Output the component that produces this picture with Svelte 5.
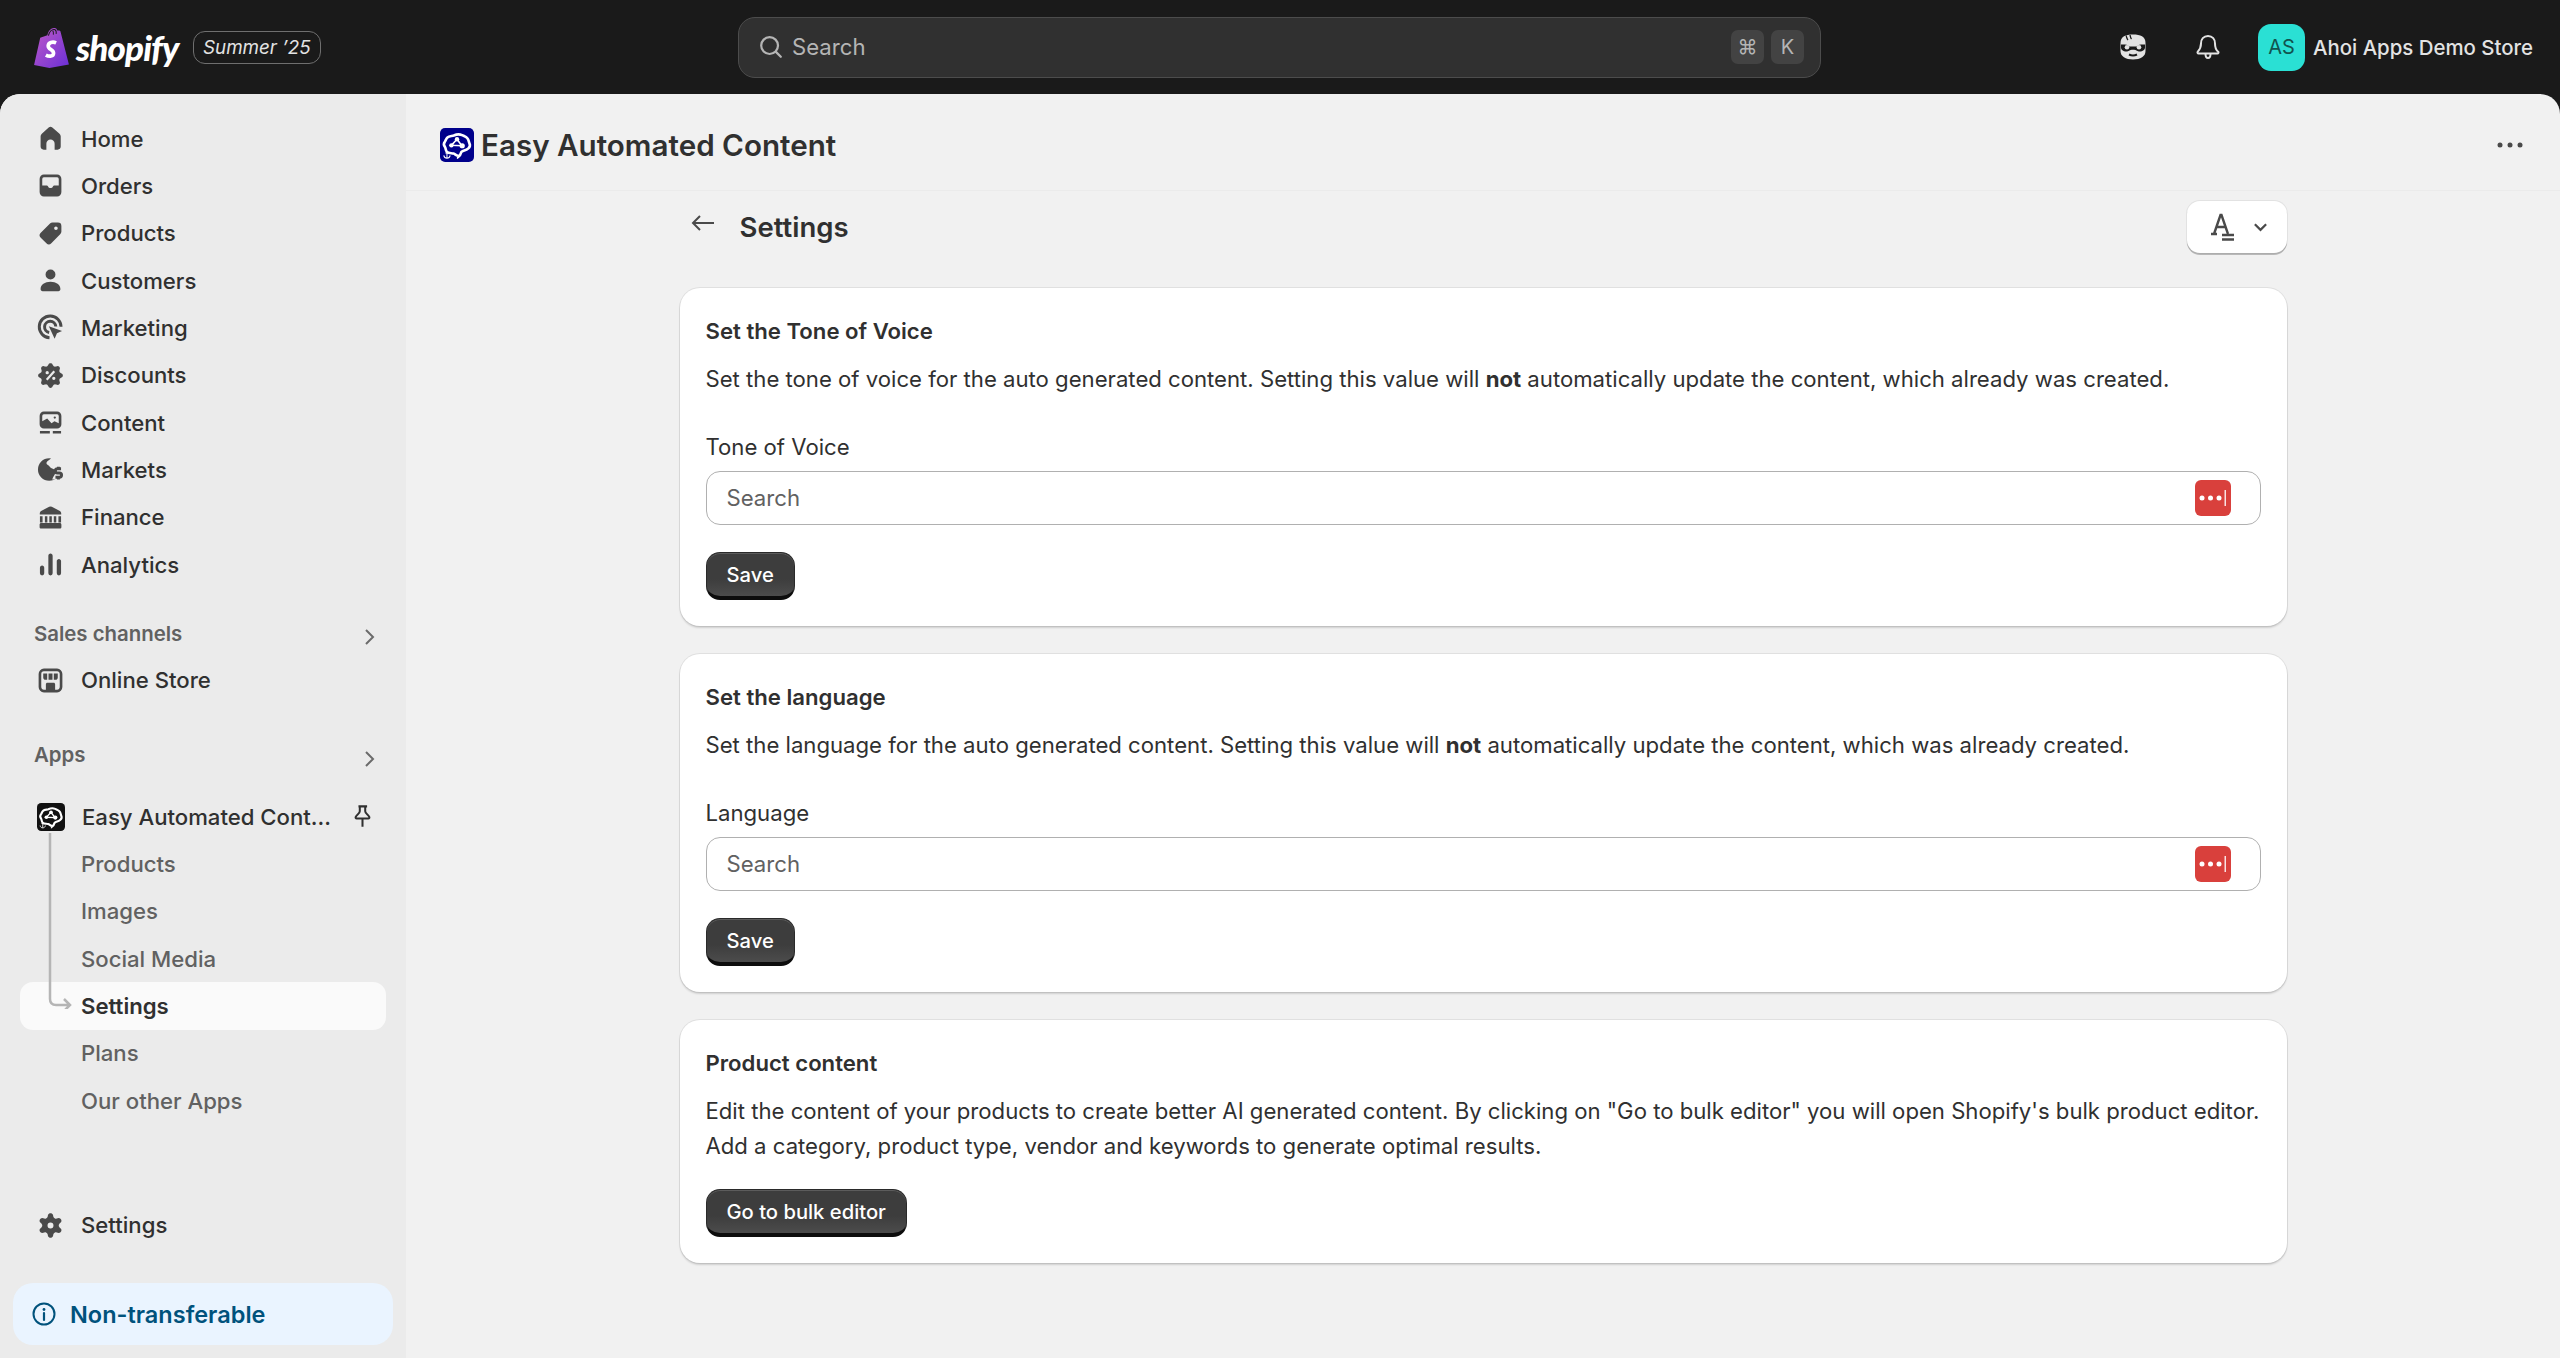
<script>
	// round path helpers, the polaris icons are drawn on a 20 box
	function circle(cx, cy, r) {
		return `M${cx - r} ${cy}a${r} ${r} 0 1 0 ${r * 2} 0a${r} ${r} 0 1 0 ${-r * 2} 0z`;
	}

	function lobed(n, r, amp, sharp = 1) {
		let pts = [];
		for (let i = 0; i < 120; i++) {
			const t = (i / 120) * Math.PI * 2;
			const c = Math.cos(n * t);
			const rr = r + amp * Math.sign(c) * Math.pow(Math.abs(c), sharp);
			pts.push(`${(10 + rr * Math.sin(t)).toFixed(2)} ${(10 - rr * Math.cos(t)).toFixed(2)}`);
		}
		return 'M' + pts.join('L') + 'z';
	}

	const icons = {
		home: [['f', 'M8.9 3.4a1.7 1.7 0 0 1 2.2 0l4.2 3.5c.6.5.9 1.100.9 1.900v6.100c0 1-.8 1.850-1.850 1.850H12.500v-3.600a2.500 2.500 0 0 0-5 0v3.600H5.850C4.800 16.750 4 15.900 4 14.900V8.800c0-.8.3-1.400.9-1.900z']],
		orders: [['f', 'M6 3.400h8A2.600 2.600 0 0 1 16.600 6v8a2.600 2.600 0 0 1-2.600 2.600H6A2.600 2.600 0 0 1 3.400 14V6A2.600 2.600 0 0 1 6 3.400zM5 10h2.400c.6 0 1 .3 1.300.9.2.4.6.6 1.300.6s1.100-.2 1.300-.6c.3-.6.7-.9 1.300-.9H15V6a1 1 0 0 0-1-1H6a1 1 0 0 0-1 1z']],
		tag: [['f', 'M11.200 3.400h3.300a2.100 2.100 0 0 1 2.100 2.100v3.300c0 .6-.2 1.100-.6 1.500l-5.500 5.600a2.100 2.100 0 0 1-3 0l-3.400-3.400a2.100 2.100 0 0 1 0-3l5.600-5.500c.4-.4.9-.6 1.500-.6z' + circle(13.3, 6.8, 1.1)]],
		person: [['f', circle(10, 6.4, 3) + 'M4 15.200c0-2.600 2.600-4.400 6-4.400s6 1.800 6 4.400c0 .8-.5 1.300-1.200 1.300H5.200c-.7 0-1.200-.5-1.200-1.300z']],
		target: [
			['s', 'M9.400 16.200A6.600 6.600 0 1 1 16.400 9.600'],
			['s', 'M9.200 13A3.400 3.400 0 1 1 13.200 9.400'],
			['f', 'M9 9.200l8 2.900-3.100 1.400-1.400 3.300z']
		],
		discount: [['f', lobed(8, 6.7, 0.8, 0.7) + circle(8, 8.3, 1) + circle(12, 11.7, 1) + 'M11.800 6.900l1 1-4.600 5.200-1-1z']],
		content: [
			['f', 'M6 3.400h8A2.600 2.600 0 0 1 16.600 6v5a2.600 2.600 0 0 1-2.600 2.600H6A2.600 2.600 0 0 1 3.400 11V6A2.600 2.600 0 0 1 6 3.400zM5 9.200V6a1 1 0 0 1 1-1h8a1 1 0 0 1 1 1v4.400l-2.600-1.200-1.800 1.200L8 7.600z' + circle(12.6, 7, .7)],
			['f', 'M3.600 15.200h6v1.400h-6zM11.400 15.200h5v1.400h-5z']
		],
		markets: [
			['f', circle(9.2, 10, 6.8)],
			['c', 'M10.400 3c-.6 1.400-2.400 1.400-2.800 2.800-.4 1.300 1.400 1.600 2.200 2.800.6 1 1.800.6 2.600 1.400 1 .9.6 2.400 0 3.400-.5.9-1 1.600-1.400 2.600h7V3z'],
			['s', 'M16.400 9.600h-2.200a1.200 1.200 0 0 0 0 2.500h1.200a1.200 1.200 0 0 1 0 2.600h-2.400M14.800 8.400v1.200M14.800 14.700v1.400']
		],
		finance: [
			['f', 'M9.200 3.500a2 2 0 0 1 1.600 0l4.600 2.400c.8.4 1.100.9 1.100 1.700v.6H3.500v-.6c0-.8.3-1.300 1.100-1.700z'],
			['f', 'M3.600 9.300h1.600v3.800H3.600zM6.600 9.300h1.500v3.800H6.600zM9.300 9.300h1.500v3.800H9.300zM12 9.300h1.500v3.800H12zM14.800 9.300h1.600v3.800h-1.600z'],
			['f', 'M4.300 13.400h11.400c.5 0 .9.4.9.9v1.600c0 .4-.4.8-.9.8H4.300c-.5 0-.9-.4-.9-.8v-1.600c0-.5.4-.9.9-.9z']
		],
		analytics: [['f', 'M4.900 10.600c.7 0 1.300.6 1.300 1.300v3.400a1.300 1.300 0 0 1-2.600 0v-3.400c0-.7.6-1.300 1.300-1.300zM10 3.400c.7 0 1.300.6 1.300 1.300v10.600a1.300 1.300 0 0 1-2.600 0V4.700c0-.7.6-1.300 1.300-1.300zM15.100 6.600c.7 0 1.300.6 1.300 1.300v7.400a1.300 1.300 0 0 1-2.600 0V7.900c0-.7.6-1.300 1.300-1.300z']],
		store: [
			['f', 'M6 2.800h8A3.200 3.200 0 0 1 17.200 6v8a3.200 3.200 0 0 1-3.200 3.200H6A3.200 3.200 0 0 1 2.800 14V6A3.200 3.200 0 0 1 6 2.800zM6 4.400A1.600 1.600 0 0 0 4.400 6v8c0 .9.7 1.600 1.600 1.600h1.200v-3.400c0-.5.4-.9.9-.9h3.800c.5 0 .9.4.9.9v3.400H14c.9 0 1.600-.7 1.600-1.600V6c0-.9-.7-1.600-1.600-1.600z'],
			['f', 'M5.600 5.800h2.400v3.800H7c-.8 0-1.400-.6-1.400-1.400zM8.800 5.800h2.400v3.800H8.800zM12 5.800h2.400v2.400c0 .8-.6 1.400-1.400 1.400h-1z'],
			['f', 'M8.900 13h2.200v2.600H8.900z']
		],
		gear: [['f', lobed(6, 6.2, 1.2, 0.6) + circle(10, 10, 1.8)]]
	};

	const mainNav = [
		{ label: 'Home', icon: 'home' },
		{ label: 'Orders', icon: 'orders' },
		{ label: 'Products', icon: 'tag' },
		{ label: 'Customers', icon: 'person' },
		{ label: 'Marketing', icon: 'target' },
		{ label: 'Discounts', icon: 'discount' },
		{ label: 'Content', icon: 'content' },
		{ label: 'Markets', icon: 'markets' },
		{ label: 'Finance', icon: 'finance' },
		{ label: 'Analytics', icon: 'analytics' }
	];

	const subNav = ['Products', 'Images', 'Social Media', 'Settings', 'Plans', 'Our other Apps'];
</script>

{#snippet icon(name)}
	<svg class="nav-icon" viewBox="0 0 20 20">
		{#each icons[name] as [kind, d]}
			<path class={kind} {d} />
		{/each}
	</svg>
{/snippet}

{#snippet brain()}
	<g transform="translate(-1.800 -1.600) scale(1.180)">
		<path d="M10.600 15.200c-1 0-1.500-.9-2.300-1.100-1.100-.3-2.500 0-3.300-.8-.8-.7-.5-1.800-1-2.500C3.400 10 3.300 8.900 4 8.100c.5-.6.5-1.400 1.200-2 1-.9 2.200-.6 3.200-1 1.300-.6 2.800-.8 4.100-.2 1 .5 2 .7 2.700 1.600.7.8.6 1.700 1 2.500.4.900.2 1.900-.5 2.500-.8.8-1.800 1-2.800 1.300-.6.2-.9.5-1 1.100-.1.600-.5 1.300-1.300 1.800z" fill="none" stroke="#fff" stroke-width="1.300" />
		<path d="M10 7l-2.800 3 5.200.2zM10 7l2.400 3.200" fill="none" stroke="#fff" stroke-width=".8" />
		<circle cx="10" cy="7" r="1.100" fill="#fff" />
		<circle cx="7.200" cy="10" r="1.100" fill="#fff" />
		<circle cx="12.600" cy="10.200" r="1.300" fill="#fff" />
		<path d="M5 13.200v3.200M3.400 15c.2 1 .8 1.400 1.600 1.400S6.400 16 6.600 15M4.200 13.800h1.600" fill="none" stroke="#fff" stroke-width=".5" />
	</g>
{/snippet}

{#snippet card(title, children)}
	<section class="card">
		<h3>{title}</h3>
		{@render children()}
	</section>
{/snippet}

{#snippet picker(label)}
	<div class="field-label">{label}</div>
	<div class="field">
		<span>Search</span>
		<svg class="pw" viewBox="0 0 36 36">
			<rect width="36" height="36" rx="6" fill="#d9403c" />
			<circle cx="7" cy="18" r="2.500" fill="#fff" />
			<circle cx="15.500" cy="18" r="2.500" fill="#fff" />
			<circle cx="24" cy="18" r="2.500" fill="#fff" />
			<rect x="29.500" y="10" width="1.500" height="16" fill="#fff" opacity=".85" />
		</svg>
	</div>
	<button class="dark">Save</button>
{/snippet}

<div class="shell">
	<header class="topbar">
		<div class="brand">
			<svg class="bag" viewBox="0 0 34 40">
				<defs>
					<linearGradient id="bagfill" x1="0" y1="0" x2="1" y2="1">
						<stop offset="0" stop-color="#c05ac8" />
						<stop offset="1" stop-color="#6a2fd6" />
					</linearGradient>
				</defs>
				<path d="M6 10.500 13 8C13.800 3.500 17 .5 20 1c1.500.2 2.300 1.200 2.700 2.500l2-.2 1 .8L34 36.500 15 40 0 37z" fill="url(#bagfill)" />
				<path d="M14 8.500C15 4.500 17.500 2 19.800 2.400c1.400.3 2 2.200 1.700 4.300M18.200 3.500C19 5 19 6.500 18.800 7.500" fill="none" stroke="#1a1a1a" stroke-width="1" />
				<path d="M21.500 15.500c-3.500-1.500-7.500-.3-7.700 2.800-.2 3.700 5.500 3.700 5.200 7.400-.2 2.900-4 3.600-7.500 1.700" fill="none" stroke="#fff" stroke-width="3.600" />
			</svg>
			<span class="wordmark">shopify</span>
			<span class="edition">Summer ’25</span>
		</div>

		<div class="global-search">
			<svg class="search-icon" viewBox="0 0 20 20">
				<circle cx="9" cy="9" r="6" fill="none" stroke="#b5b5b5" stroke-width="1.600" />
				<path d="M13.500 13.500l3.500 3.500" stroke="#b5b5b5" stroke-width="1.600" stroke-linecap="round" />
			</svg>
			<span class="search-text">Search</span>
			<kbd>⌘</kbd>
			<kbd>K</kbd>
		</div>

		<div class="top-right">
			<svg class="top-icon mask" viewBox="0 0 26 26">
				<path d="M13 .5c7.500 0 12.500 2 12.500 8.500v8c0 5.500-5 8.500-12.500 8.500S.5 22.500.5 17V9C.5 2.500 5.500.5 13 .5z" fill="#e3e3e3" />
				<path d="M1 10.500h4c2.500 0 3 1.200 4 2h8c1-.8 1.500-2 4-2h4v3c0 2-2 4-5.500 4-2 0-3-1.800-6.500-1.800S8.500 17.500 6.500 17.500C3 17.500 1 15.500 1 13.500z" fill="#1a1a1a" />
				<circle cx="7" cy="13.300" r="2.300" fill="#e3e3e3" />
				<circle cx="19" cy="13.300" r="2.300" fill="#e3e3e3" />
				<path d="M9 20.500c2.500 1.200 5.500 1.200 8 0" stroke="#1a1a1a" stroke-width="2" fill="none" />
				<path d="M6 1.500c1 2 .5 3 2 4.500M10 1c.5 2 .5 3 1.500 4" stroke="#1a1a1a" stroke-width="1.300" fill="none" />
			</svg>
			<svg class="top-icon bell" viewBox="0 0 26 26">
				<path d="M13 2c-4.500 0-7 3.300-7 7.500 0 3.500-1.200 6-3.200 8.200-.7.8-.2 1.800.8 1.800h18.800c1 0 1.500-1 .8-1.800C20.200 15.500 20 13 20 9.500 20 5.300 17.500 2 13 2z" fill="none" stroke="#e3e3e3" stroke-width="2" />
				<path d="M10.500 20c0 2.800 1.200 4 2.500 4s2.500-1.200 2.500-4" fill="none" stroke="#e3e3e3" stroke-width="2" />
			</svg>
			<span class="avatar">AS</span>
			<span class="store">Ahoi Apps Demo Store</span>
		</div>
	</header>

	<div class="frame">
		<aside class="sidebar">
			<nav>
				{#each mainNav as item}
					<a class="nav-row" href="#top">
						{@render icon(item.icon)}
						<span>{item.label}</span>
					</a>
				{/each}
			</nav>

			<div class="section-head first">
				<span>Sales channels</span>
				<svg class="chev" viewBox="0 0 12 20"><path d="M2 3l7 7-7 7" /></svg>
			</div>
			<a class="nav-row" href="#top">
				{@render icon('store')}
				<span>Online Store</span>
			</a>

			<div class="section-head second">
				<span>Apps</span>
				<svg class="chev" viewBox="0 0 12 20"><path d="M2 3l7 7-7 7" /></svg>
			</div>

			<div class="app-group">
				<a class="nav-row app-row" href="#top">
					<svg class="app-logo small" viewBox="0 0 20 20">
						<rect width="20" height="20" rx="3" fill="#111" />
						{@render brain()}
					</svg>
					<span class="truncate">Easy Automated Cont...</span>
					<svg class="pin" viewBox="0 0 20 20">
						<path d="M7 2.500h6.400M8 2.500v3.600c0 1.400-2.200 2.600-3 4.200-.3.700 0 1.200.7 1.200h8.600c.7 0 1-.5.700-1.200-.8-1.600-3-2.800-3-4.200V2.500M10 11.500v6" />
					</svg>
				</a>
				<svg class="tree" viewBox="0 0 24 176">
					<path d="M2 0v166c0 4 2 6 6 6h14M16 166l6 6-6 6" />
				</svg>
				{#each subNav as sub}
					<a class="nav-row sub" class:active={sub === 'Settings'} href="#top">
						<span>{sub}</span>
					</a>
				{/each}
			</div>

			<div class="side-bottom">
				<a class="nav-row" href="#top">
					{@render icon('gear')}
					<span>Settings</span>
				</a>
				<div class="notice">
					<svg class="info" viewBox="0 0 24 24">
						<circle cx="12" cy="12" r="10.500" fill="none" stroke="#00527c" stroke-width="2" />
						<circle cx="12" cy="7.500" r="1.400" fill="#00527c" />
						<path d="M12 11v7" stroke="#00527c" stroke-width="2.200" stroke-linecap="round" />
					</svg>
					<span>Non-transferable</span>
				</div>
			</div>
		</aside>

		<main class="main">
			<div class="app-bar">
				<svg class="app-logo" viewBox="0 0 20 20">
					<rect width="20" height="20" rx="3" fill="#00008b" />
					{@render brain()}
				</svg>
				<h1>Easy Automated Content</h1>
				<svg class="dots" viewBox="0 0 26 6">
					<circle cx="3" cy="3" r="2.500" />
					<circle cx="13" cy="3" r="2.500" />
					<circle cx="23" cy="3" r="2.500" />
				</svg>
			</div>

			<div class="page">
				<div class="page-head">
					<svg class="back" viewBox="0 0 24 20">
						<path d="M23 10H2M9 3l-7 7 7 7" />
					</svg>
					<h2>Settings</h2>
					<button class="font-btn" aria-label="Font options">
						<svg class="font-a" viewBox="0 0 26 28">
							<path d="M2 21h6M5 21 11.500 2h1L19 21M7 14h10.500" fill="none" stroke="#4a4a4a" stroke-width="2.400" />
							<path d="M13 22h12M13 26.500h12" stroke="#4a4a4a" stroke-width="2.400" />
						</svg>
						<svg class="font-chev" viewBox="0 0 16 10"><path d="M2 2l6 6 6-6" /></svg>
					</button>
				</div>

				{#snippet tone()}
					<p>Set the tone of voice for the auto generated content. Setting this value will <b>not</b> automatically update the content, which already was created.</p>
					{@render picker('Tone of Voice')}
				{/snippet}
				{#snippet language()}
					<p>Set the language for the auto generated content. Setting this value will <b>not</b> automatically update the content, which was already created.</p>
					{@render picker('Language')}
				{/snippet}
				{#snippet bulk()}
					<p>Edit the content of your products to create better AI generated content. By clicking on "Go to bulk editor" you will open Shopify's bulk product editor.<br />Add a category, product type, vendor and keywords to generate optimal results.</p>
					<button class="dark bulk">Go to bulk editor</button>
				{/snippet}

				<div class="stack">
					{@render card('Set the Tone of Voice', tone)}
					{@render card('Set the language', language)}
					{@render card('Product content', bulk)}
				</div>
			</div>
		</main>
	</div>
</div>

<style>
	:global(body) {
		margin: 0;
		background: #1a1a1a;
		font-family: Inter, 'Noto Sans', sans-serif;
		color: #303030;
	}

	.shell {
		height: 1358px;
		display: flex;
		flex-direction: column;
		overflow: hidden;
	}

	.topbar {
		height: 94px;
		flex: none;
		display: grid;
		grid-template-columns: 738px 1083px 1fr;
		align-items: center;
	}

	.brand {
		display: flex;
		align-items: center;
		padding-left: 34px;
	}

	.bag {
		width: 35px;
		height: 41px;
		flex: none;
	}

	.wordmark {
		margin-left: 7px;
		width: 103px;
		font: italic 900 35px/40px Lato, sans-serif;
		letter-spacing: -0.9px;
		color: #fff;
		white-space: nowrap;
	}

	.edition {
		margin-left: 14px;
		height: 31px;
		padding: 0 9px;
		display: flex;
		align-items: center;
		border: 1.500px solid #6f6f6f;
		border-radius: 12px;
		font-size: 18.800px;
		font-style: italic;
		color: #e3e3e3;
		white-space: nowrap;
	}

	.global-search {
		height: 61px;
		box-sizing: border-box;
		display: flex;
		align-items: center;
		gap: 7px;
		padding: 0 16px 0 18px;
		background: #303030;
		border: 1.500px solid #4c4c4c;
		border-radius: 17px;
		color: #b5b5b5;
		font-size: 22.150px;
	}

	.search-icon {
		width: 28px;
		height: 28px;
		flex: none;
	}

	.search-text {
		flex: 1;
	}

	kbd {
		width: 33px;
		height: 34px;
		display: flex;
		align-items: center;
		justify-content: center;
		background: #434343;
		border-radius: 7px;
		font-family: inherit;
		font-size: 20px;
	}

	.top-right {
		display: flex;
		align-items: center;
		justify-content: flex-end;
		padding-right: 27px;
	}

	.top-icon {
		width: 26px;
		height: 26px;
		flex: none;
	}

	.bell {
		margin-left: 49px;
	}

	.avatar {
		margin-left: 37px;
		width: 47px;
		height: 47px;
		flex: none;
		display: flex;
		align-items: center;
		justify-content: center;
		background: #2ae0d4;
		border-radius: 13px;
		color: #11544f;
		font-size: 20px;
	}

	.store {
		margin-left: 8px;
		color: #e3e3e3;
		font-size: 20.400px;
		font-weight: 500;
		white-space: nowrap;
	}

	.frame {
		flex: 1;
		display: flex;
		border-radius: 20px 20px 0 0;
		overflow: hidden;
		background: #f1f1f1;
		min-height: 0;
	}

	.sidebar {
		width: 406px;
		flex: none;
		box-sizing: border-box;
		padding: 21px 13px 13px;
		display: flex;
		flex-direction: column;
		background: #ebebeb;
	}

	.nav-row {
		height: 47.330px;
		flex: none;
		display: flex;
		align-items: center;
		padding-left: 21px;
		box-sizing: border-box;
		color: #303030;
		text-decoration: none;
		font-size: 22.150px;
		font-weight: 500;
	}

	.nav-icon {
		width: 33px;
		height: 33px;
		margin-right: 14px;
		flex: none;
	}

	.nav-icon :global(.f) {
		fill: #4a4a4a;
		fill-rule: evenodd;
	}

	.nav-icon :global(.s) {
		fill: none;
		stroke: #4a4a4a;
		stroke-width: 1.800;
	}

	.nav-icon :global(.c) {
		fill: #ebebeb;
	}

	.section-head {
		display: flex;
		align-items: center;
		justify-content: space-between;
		padding: 0 17px 0 21px;
		height: 34px;
		color: #616161;
		font-size: 20.400px;
		font-weight: 600;
	}

	.section-head.first {
		margin-top: 28px;
		margin-bottom: 6.500px;
	}

	.section-head.second {
		margin-top: 33.500px;
		margin-bottom: 21.500px;
	}

	.chev {
		width: 12px;
		height: 20px;
		margin-top: 8px;
		fill: none;
		stroke: #6b6b6b;
		stroke-width: 2;
	}

	.app-group {
		position: relative;
	}

	.app-row {
		font-weight: 520;
	}

	.app-logo {
		width: 34px;
		height: 34px;
		margin-right: 7px;
		flex: none;
	}

	.app-logo.small {
		width: 28px;
		height: 28px;
		margin: 0 17px 0 3px;
	}

	.truncate {
		width: 267px;
		white-space: nowrap;
	}

	.pin {
		width: 27px;
		height: 27px;
		flex: none;
		fill: none;
		stroke: #303030;
		stroke-width: 1.500;
	}

	.tree {
		position: absolute;
		left: 35px;
		top: 40px;
		width: 24px;
		height: 176px;
		fill: none;
		stroke: #b5b5b5;
		stroke-width: 2.500;
		z-index: 1;
	}

	.sub {
		padding-left: 68px;
		color: #616161;
		font-weight: 450;
	}

	.sub.active {
		background: #fafafa;
		border-radius: 13px;
		color: #303030;
		font-weight: 600;
		margin: 0 7px;
		padding-left: 61px;
	}

	.side-bottom {
		margin-top: auto;
	}

	.notice {
		margin-top: 34px;
		height: 62px;
		display: flex;
		align-items: center;
		gap: 14px;
		padding-left: 19px;
		background: #eaf4ff;
		border-radius: 20px;
		color: #00527c;
		font-size: 23.500px;
		font-weight: 600;
	}

	.info {
		width: 24px;
		height: 24px;
		flex: none;
	}

	.main {
		flex: 1;
		min-width: 0;
	}

	.app-bar {
		height: 97px;
		box-sizing: border-box;
		display: flex;
		align-items: center;
		padding: 5px 37px 0 34px;
		border-bottom: 1.500px solid #ebebeb;
	}

	h1 {
		flex: 1;
		margin: 0;
		font-size: 29.600px;
		font-weight: 600;
	}

	.dots {
		width: 26px;
		height: 6px;
		fill: #4a4a4a;
	}

	.page {
		width: 1607px;
		margin: 0 auto;
	}

	.page-head {
		display: flex;
		align-items: center;
		height: 52px;
		padding-top: 10px;
		margin-bottom: 35px;
	}

	.back {
		width: 24px;
		height: 20px;
		margin: -8px 0 0 11px;
		fill: none;
		stroke: #4a4a4a;
		stroke-width: 2;
	}

	h2 {
		flex: 1;
		margin: 0 0 0 25px;
		font-size: 27.500px;
		font-weight: 600;
	}

	.font-btn {
		width: 100px;
		height: 52px;
		padding: 0 19px 0 22px;
		display: flex;
		align-items: center;
		justify-content: space-between;
		background: #fff;
		border: 0;
		border-radius: 13px;
		box-shadow: 0 0 0 1px rgba(0, 0, 0, .06), 0 2px 0 #b8b8b8;
	}

	.font-a {
		width: 26px;
		height: 28px;
	}

	.font-chev {
		width: 15px;
		height: 10px;
		fill: none;
		stroke: #4a4a4a;
		stroke-width: 2.400;
	}

	.stack {
		display: flex;
		flex-direction: column;
		gap: 28px;
	}

	.card {
		padding: 26px;
		background: #fff;
		border-radius: 20px;
		box-shadow: 0 0 0 1px rgba(0, 0, 0, .07), 0 2px 2px rgba(0, 0, 0, .14);
		font-size: 22.150px;
		line-height: 34.300px;
	}

	h3 {
		margin: 0 0 14px;
		font-size: inherit;
		font-weight: 600;
	}

	p {
		margin: 0;
	}

	b {
		font-weight: 700;
	}

	.field-label {
		margin-top: 33.200px;
		margin-bottom: 7px;
	}

	.field {
		height: 54px;
		box-sizing: border-box;
		display: flex;
		align-items: center;
		justify-content: space-between;
		padding: 0 29px 0 20px;
		border: 1.500px solid #b0b0b0;
		border-radius: 14px;
		color: #616161;
	}

	.pw {
		width: 36px;
		height: 36px;
	}

	.dark {
		display: block;
		height: 48px;
		box-sizing: border-box;
		margin-top: 27px;
		padding: 0 20px;
		background: linear-gradient(#3d3d3d 60%, #4c4c4c);
		border: 1.500px solid #2a2a2a;
		border-bottom: 4px solid #0d0d0d;
		border-radius: 14px;
		box-shadow: inset 0 1px 0 #5c5c5c;
		color: #fff;
		font: 550 20.200px Inter, sans-serif;
	}

	.dark.bulk {
		margin-top: 26px;
	}
</style>
